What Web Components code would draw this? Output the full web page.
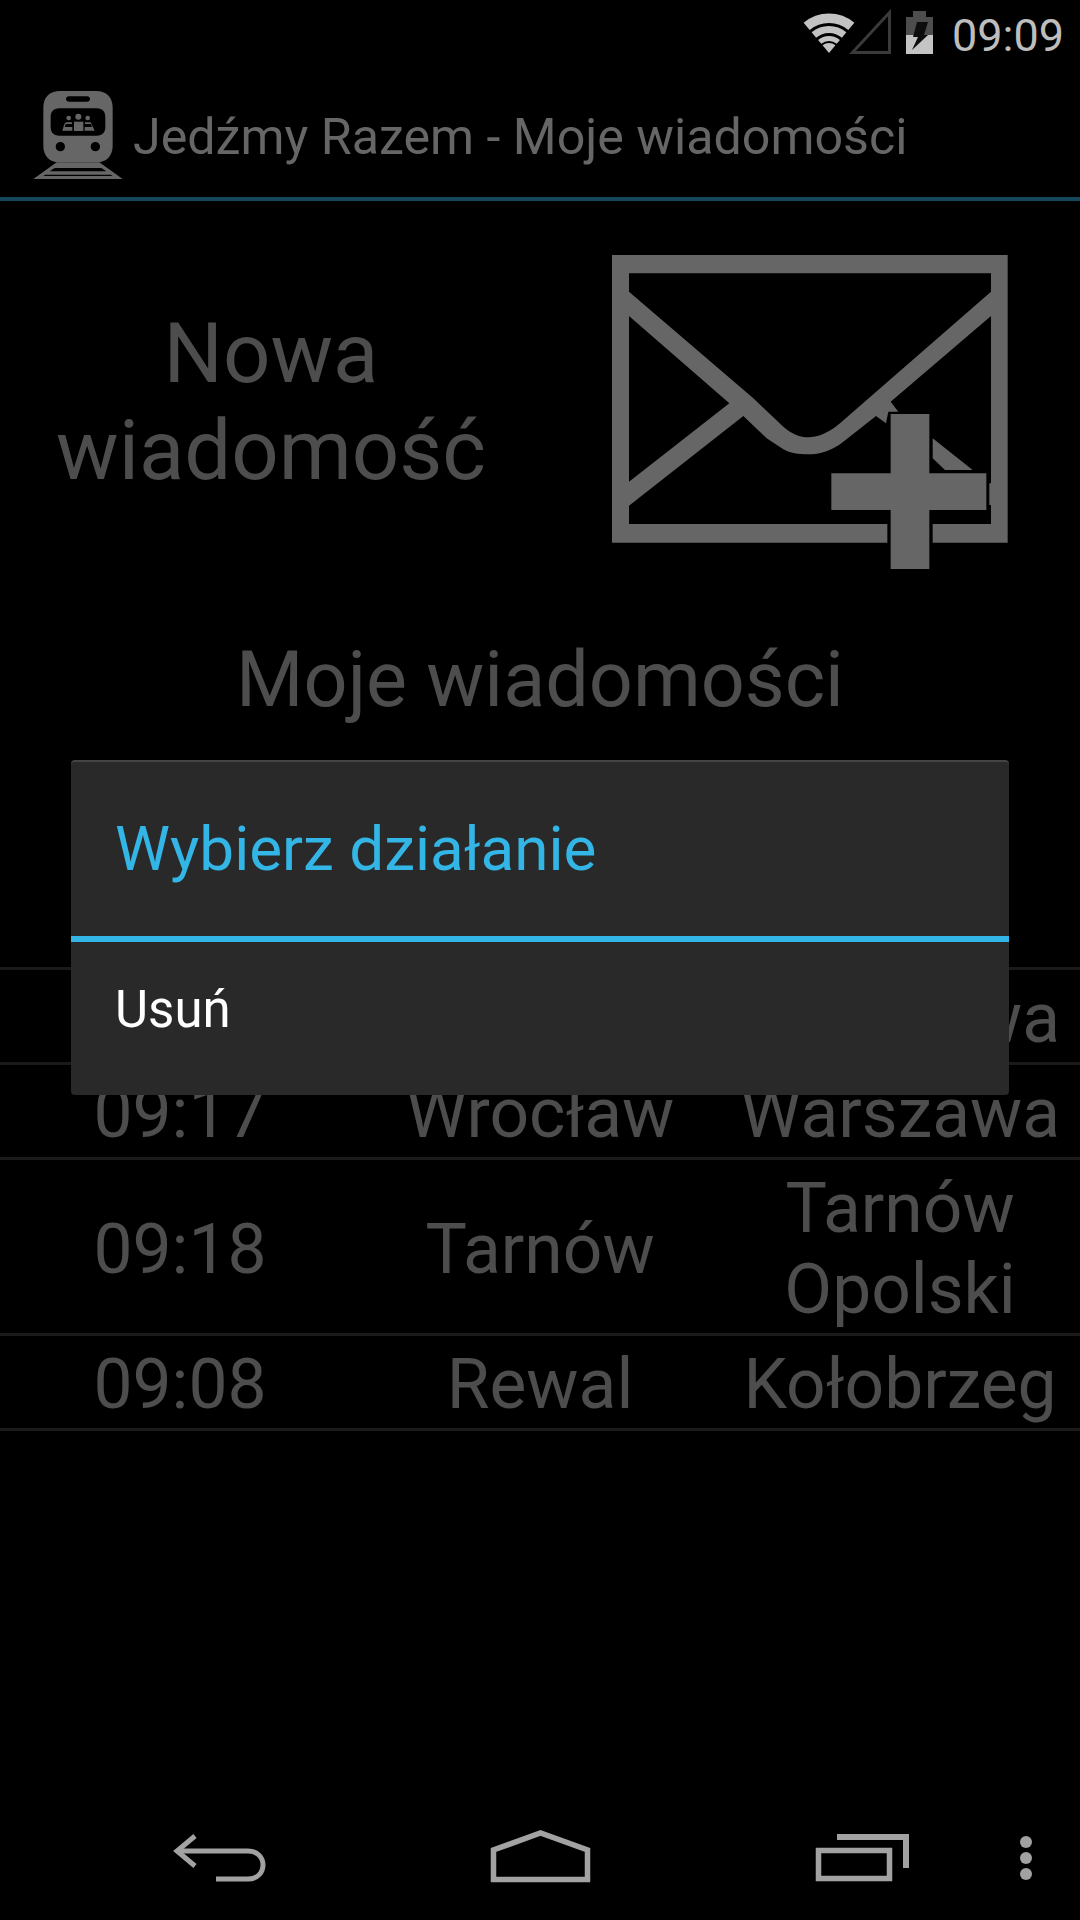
<!DOCTYPE html>
<html lang="pl">
<head>
<meta charset="utf-8">
<title>Jedźmy Razem</title>
<style>
  html, body { margin: 0; background: #000; }
  body { font-family: Roboto, "Liberation Sans", sans-serif; }
</style>
</head>
<body>
<app-screen>
  <status-bar time="09:09"></status-bar>
  <action-bar>Jedźmy Razem - Moje wiadomości</action-bar>
  <new-message>Nowa<br>wiadomość</new-message>
  <section-title>Moje wiadomości</section-title>
  <message-list>
    <message-row><span></span><span></span><span>Warszawa</span></message-row>
    <message-row><span>09:17</span><span>Wrocław</span><span>Warszawa</span></message-row>
    <message-row><span>09:18</span><span>Tarnów</span><span>Tarnów Opolski</span></message-row>
    <message-row><span>09:08</span><span>Rewal</span><span>Kołobrzeg</span></message-row>
  </message-list>
  <nav-bar></nav-bar>
  <action-dialog heading="Wybierz działanie">
    <dialog-item>Usuń</dialog-item>
  </action-dialog>
</app-screen>

<script>
function shadow(el, html) {
  el.attachShadow({ mode: 'open' }).innerHTML = html;
}

class AppScreen extends HTMLElement {
  connectedCallback() {
    if (this.shadowRoot) return;
    shadow(this, `
      <style>
        :host {
          display: flex;
          flex-direction: column;
          position: relative;
          width: 1080px;
          height: 1920px;
          overflow: hidden;
          background: #000;
        }
      </style>
      <slot></slot>`);
  }
}

class StatusBar extends HTMLElement {
  connectedCallback() {
    if (this.shadowRoot) return;
    shadow(this, `
      <style>
        :host {
          display: flex;
          align-items: flex-start;
          justify-content: flex-end;
          height: 72px;
          box-sizing: border-box;
          padding-right: 16px;
          flex: none;
        }
        svg { display: block; margin-top: 5px; }
        .time {
          font-size: 45px;
          font-weight: 400;
          color: #bdbdbd;
          margin-left: 8px;
          margin-top: 11px;
          line-height: 50px;
        }
      </style>
      <svg width="150" height="55" viewBox="795 5 150 55">
        <g fill="none" stroke="#c2c2c2">
          <path d="M807.66 26.38 A34.75 34.75 0 0 1 852.34 26.38" stroke-width="9.5"/>
          <path d="M814.89 35 A23.5 23.5 0 0 1 845.11 35" stroke-width="7"/>
          <path d="M820.68 41.89 A14.5 14.5 0 0 1 839.32 41.89" stroke-width="5"/>
        </g>
        <path d="M830 53 L823.57 45.34 A10 10 0 0 1 836.43 45.34 Z" fill="#c2c2c2"/>
        <path d="M853.5 52.5 L890.5 12.5 V52.5 Z" fill="none" stroke="#3a3a3a" stroke-width="3"/>
        <path d="M914 11 H927 V17 H934 V35 H907 V17 H914 Z" fill="#4d4d4d"/>
        <path d="M907 35 H934 V54 H907 Z" fill="#c4c4c4"/>
        <path d="M918 22 H929 L925 35 H929 L913 50 L919 37 H914 Z" fill="#0d0d0d"/>
      </svg>
      <span class="time">${this.getAttribute('time')}</span>`);
  }
}

class ActionBar extends HTMLElement {
  connectedCallback() {
    if (this.shadowRoot) return;
    shadow(this, `
      <style>
        :host {
          display: flex;
          align-items: flex-start;
          flex: none;
          height: 125px;
          border-bottom: 4px solid #14485a;
          color: #666;
          font-size: 50.2px;
        }
        svg { display: block; flex: none; margin-top: -2px; }
        .title { margin-left: -67px; padding-top: 35px; white-space: nowrap; }
      </style>
      <svg width="200" height="140" viewBox="0 0 600 420">
        <g fill="#666">
          <path fill-rule="evenodd" d="M180 63 H288 C320 63 338 82 338 112 V228 C338 256 320 277 292 277 H176 C148 277 130 256 130 228 V112 C130 82 148 63 180 63 Z
            M207 79 C201 79 198 83 198 87 C198 91 201 95 207 95 H261 C267 95 270 91 270 87 C270 83 267 79 261 79 Z
            M178 115 C160 115 152 126 152 142 V170 C152 186 160 197 178 197 H290 C308 197 316 186 316 170 V142 C316 126 308 115 290 115 Z
            M181 216 A14 14 0 1 0 181 244 A14 14 0 1 0 181 216 Z
            M286 216 A14 14 0 1 0 286 244 A14 14 0 1 0 286 216 Z"/>
          <circle cx="235" cy="140" r="9"/>
          <circle cx="206" cy="144" r="7"/>
          <circle cx="263" cy="144" r="7"/>
          <path d="M222 155 H250 V183 H222 Z"/>
          <path d="M198 157 H216 V162 H197 L194 171 H217 V182 H187 L193 162 Z"/>
          <path d="M255 157 H272 L284 182 H254 V171 H276 L273 162 H255 Z"/>
          <path fill-rule="evenodd" d="M170 277 H298 L368 327 H100 Z
            M164 294 L149 304 H319 L304 294 Z
            M136 314 L130 318 H338 L332 314 Z"/>
        </g>
      </svg>
      <span class="title"><slot></slot></span>`);
  }
}

class NewMessage extends HTMLElement {
  connectedCallback() {
    if (this.shadowRoot) return;
    shadow(this, `
      <style>
        :host {
          display: flex;
          flex: none;
          padding-top: 39px;
          color: #4d4d4d;
        }
        .label {
          width: 542px;
          padding-top: 65px;
          text-align: center;
          font-size: 83.3px;
          line-height: 97px;
          flex: none;
        }
        svg { display: block; margin-left: 48px; flex: none; }
      </style>
      <div class="label"><slot></slot></div>
      <svg width="440" height="340" viewBox="0 0 1320 1020">
        <g fill="#666">
          <path fill-rule="evenodd" d="M66 45 H1253 V908 H1028 V852 H1203 V100 H117 V852 H892 V908 H66 Z"/>
          <path d="M117 155 L490 475 L580 560 C605 582 630 592 655 592 C680 592 712 582 750 550 L1203 155 V228 L902 485 L925 515 H895 L888 550 L858 528 L760 605 C725 632 690 643 655 643 C625 643 600 640 580 628 L530 595 L460 528 L117 797 V725 L418 490 L117 228 Z"/>
          <path d="M1028 595 L1148 690 H1065 L1028 655 Z"/>
          <path d="M1198 730 H1203 V795 H1198 Z"/>
          <path d="M902 522 H1018 V700 H1189 V810 H1018 V987 H902 V810 H724 V700 H902 Z"/>
        </g>
      </svg>`);
  }
}

class SectionTitle extends HTMLElement {
  connectedCallback() {
    if (this.shadowRoot) return;
    shadow(this, `
      <style>
        :host {
          display: block;
          flex: none;
          padding-top: 54px;
          text-align: center;
          font-size: 77.3px;
          line-height: 92px;
          color: #4d4d4d;
        }
      </style>
      <slot></slot>`);
  }
}

class MessageList extends HTMLElement {
  connectedCallback() {
    if (this.shadowRoot) return;
    shadow(this, `
      <style>
        :host {
          display: block;
          flex: none;
          margin-top: 241px;
          border-top: 3px solid #1a1a1a;
        }
      </style>
      <slot></slot>`);
  }
}

class MessageRow extends HTMLElement {
  connectedCallback() {
    if (this.shadowRoot) return;
    shadow(this, `
      <style>
        :host {
          display: grid;
          grid-template-columns: repeat(3, minmax(0, 1fr));
          align-items: center;
          padding: 8px 0 3px;
          border-bottom: 3px solid #1a1a1a;
          text-align: center;
          font-size: 69.5px;
          line-height: 81px;
          color: #4d4d4d;
        }
        ::slotted(span) { display: block; }
      </style>
      <slot></slot>`);
  }
}

class NavBar extends HTMLElement {
  connectedCallback() {
    if (this.shadowRoot) return;
    shadow(this, `
      <style>
        :host { display: block; margin-top: auto; height: 144px; flex: none; }
        svg { display: block; }
      </style>
      <svg width="1080" height="144" viewBox="0 1776 1080 144" fill="none" stroke="#a2a2a2" stroke-width="5">
        <path d="M195 1836 L177 1851 L195 1866"/>
        <path d="M177 1851 H248 C268 1851 268 1879 248 1879 H216"/>
        <path d="M493.5 1879.5 V1850 L540.5 1833 L587.5 1850 V1879.5 Z" stroke-width="5.5"/>
        <path d="M818.5 1850.5 H889.5 V1878.5 H818.5 Z" stroke-width="5.5"/>
        <path d="M837 1837 H906 V1868" stroke-width="6"/>
        <g fill="#a2a2a2" stroke="none">
          <circle cx="1026" cy="1842" r="6"/>
          <circle cx="1026" cy="1858" r="6"/>
          <circle cx="1026" cy="1874" r="6"/>
        </g>
      </svg>`);
  }
}

class ActionDialog extends HTMLElement {
  connectedCallback() {
    if (this.shadowRoot) return;
    shadow(this, `
      <style>
        :host {
          display: block;
          position: absolute;
          left: 71px;
          top: 760px;
          width: 938px;
          height: 335px;
          box-sizing: border-box;
          border-top: 2px solid #444;
          border-radius: 4px;
          background: #292929;
          overflow: hidden;
        }
        h2 {
          margin: 0;
          height: 174px;
          box-sizing: border-box;
          padding: 50px 0 0 44px;
          font-size: 62px;
          font-weight: 400;
          color: #33b5e5;
        }
        .rule { height: 6px; background: #33b5e5; }
      </style>
      <h2>${this.getAttribute('heading')}</h2>
      <div class="rule"></div>
      <slot></slot>`);
  }
}

class DialogItem extends HTMLElement {
  connectedCallback() {
    if (this.shadowRoot) return;
    shadow(this, `
      <style>
        :host {
          display: block;
          padding: 38px 0 0 44px;
          font-size: 51px;
          color: #fff;
        }
      </style>
      <slot></slot>`);
  }
}

customElements.define('app-screen', AppScreen);
customElements.define('status-bar', StatusBar);
customElements.define('action-bar', ActionBar);
customElements.define('new-message', NewMessage);
customElements.define('section-title', SectionTitle);
customElements.define('message-list', MessageList);
customElements.define('message-row', MessageRow);
customElements.define('nav-bar', NavBar);
customElements.define('action-dialog', ActionDialog);
customElements.define('dialog-item', DialogItem);
</script>
</body>
</html>
